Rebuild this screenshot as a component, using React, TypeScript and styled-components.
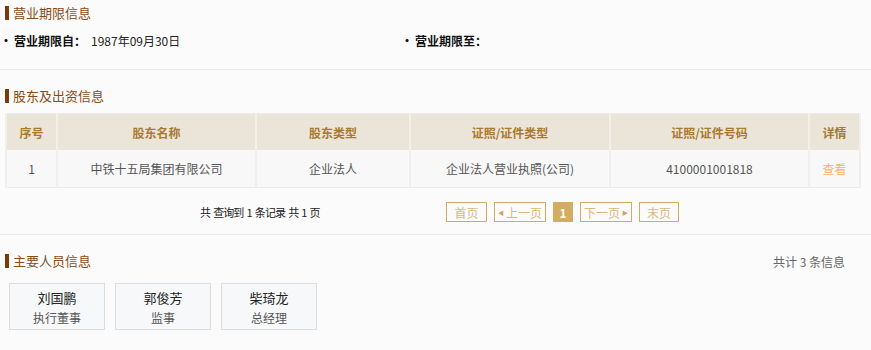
import React from 'react';
import styled, { createGlobalStyle } from 'styled-components';

const GlobalStyle = createGlobalStyle`
  body {
    margin: 0;
    background: #fbfbfb;
    font-family: "Noto Sans CJK SC", "Noto Sans", "Liberation Sans", sans-serif;
    font-size: 12px;
    color: #333;
  }
`;

const Section = styled.div<{ $top: number; $bottom: number; $line?: boolean }>`
  padding: ${p => p.$top}px 0 ${p => p.$bottom}px;
  border-bottom: ${p => (p.$line ? '1px solid #ebebeb' : 'none')};
`;

const TitleRow = styled.div`
  display: flex;
  align-items: center;
  justify-content: space-between;
  height: 20px;
  padding-right: 26px;
`;

const Title = styled.h3`
  margin: 0;
  display: flex;
  align-items: center;
  font-size: 13px;
  font-weight: normal;
  color: #8b4a12;
  line-height: 20px;
  &::before {
    content: '';
    width: 4px;
    height: 14px;
    background: #7c3a08;
    margin: 0 4px 0 5px;
  }
`;

const Count = styled.span`
  color: #666;
  font-size: 12px;
`;

const InfoRow = styled.div`
  display: grid;
  grid-template-columns: 401px 1fr;
  margin-top: 8px;
  line-height: 20px;
`;

const Field = styled.div`
  display: flex;
  align-items: center;
  white-space: nowrap;
`;

const Label = styled.span`
  font-weight: bold;
  color: #111;
  min-width: 91px;
  &::before {
    content: '·';
    margin-right: 2px;
  }
`;

const Value = styled.span`
  color: #222;
`;

const Table = styled.table`
  margin: 7px 0 0 5px;
  width: 856px;
  border-collapse: collapse;
  border: 1px solid #ebebeb;
  table-layout: fixed;
  text-align: center;
`;

const Th = styled.th<{ $w?: number }>`
  width: ${p => (p.$w ? `${p.$w}px` : 'auto')};
  height: 36px;
  padding: 0;
  background: #ebe4d9;
  color: #a87a2e;
  font-size: 12px;
  font-weight: bold;
  border: 2px solid #f3f0ea;
  border-top: none;
  border-bottom: none;
`;

const Td = styled.td<{ $link?: boolean }>`
  height: 37px;
  padding: 0;
  background: #f8f8f8;
  color: ${p => (p.$link ? '#f9b36d' : '#555')};
  border: 2px solid #efefef;
  border-top: none;
  border-bottom: none;
`;

const Pager = styled.div`
  display: flex;
  align-items: center;
  margin-top: 14px;
  padding-left: 200px;
`;

const PagerInfo = styled.span`
  width: 246px;
  color: #222;
  font-size: 11px;
  white-space: pre;
  letter-spacing: -0.9px;
  word-spacing: 1.5px;
`;

const PageButtons = styled.div`
  display: flex;
  gap: 7px;
`;

const PageButton = styled.span<{ $active?: boolean; $w: number }>`
  box-sizing: border-box;
  width: ${p => p.$w}px;
  height: 20px;
  display: flex;
  align-items: center;
  justify-content: center;
  gap: 2px;
  border: 1px solid #d3ab63;
  background: ${p => (p.$active ? '#d3ab63' : 'transparent')};
  color: ${p => (p.$active ? '#fff' : '#dcb77a')};
  font-size: 12px;
  font-weight: ${p => (p.$active ? 'bold' : 'normal')};
`;

const Arrow = styled.span`
  font-size: 6px;
  color: #cfa55b;
`;

const People = styled.div`
  display: flex;
  gap: 10px;
  margin-top: 12px;
  padding-left: 9px;
`;

const Person = styled.div`
  box-sizing: border-box;
  width: 96px;
  height: 47px;
  padding-top: 2px;
  border: 1px solid #dcdcdc;
  background: #f6f8f9;
  display: flex;
  flex-direction: column;
  align-items: center;
  justify-content: center;
`;

const Name = styled.span`
  font-size: 13px;
  color: #222;
  line-height: 20px;
`;

const Role = styled.span`
  font-size: 12px;
  color: #555;
  line-height: 19px;
`;

const cols = [
  { t: '序号', w: 49 },
  { t: '股东名称', w: 197 },
  { t: '股东类型', w: 152 },
  { t: '证照/证件类型', w: 198 },
  { t: '证照/证件号码', w: 197 },
  { t: '详情' },
];

const people = [
  { name: '刘国鹏', role: '执行董事' },
  { name: '郭俊芳', role: '监事' },
  { name: '柴琦龙', role: '总经理' },
];

export default function App() {
  return (
    <>
      <GlobalStyle />
      <Section $top={3} $bottom={18} $line>
        <TitleRow>
          <Title>营业期限信息</Title>
        </TitleRow>
        <InfoRow>
          <Field>
            <Label>营业期限自：</Label>
            <Value>1987年09月30日</Value>
          </Field>
          <Field>
            <Label>营业期限至：</Label>
          </Field>
        </InfoRow>
      </Section>

      <Section $top={16} $bottom={12} $line>
        <TitleRow>
          <Title>股东及出资信息</Title>
        </TitleRow>
        <Table>
          <thead>
            <tr>
              {cols.map(c => (
                <Th key={c.t} $w={c.w}>{c.t}</Th>
              ))}
            </tr>
          </thead>
          <tbody>
            <tr>
              <Td>1</Td>
              <Td>中铁十五局集团有限公司</Td>
              <Td>企业法人</Td>
              <Td>企业法人营业执照(公司)</Td>
              <Td>4100001001818</Td>
              <Td $link>查看</Td>
            </tr>
          </tbody>
        </Table>
        <Pager>
          <PagerInfo>共 查询到 1 条记录 共 1 页</PagerInfo>
          <PageButtons>
            <PageButton $w={41}>首页</PageButton>
            <PageButton $w={52}><Arrow>◀</Arrow>上一页</PageButton>
            <PageButton $w={20} $active>1</PageButton>
            <PageButton $w={52}>下一页<Arrow>▶</Arrow></PageButton>
            <PageButton $w={40}>末页</PageButton>
          </PageButtons>
        </Pager>
      </Section>

      <Section $top={16} $bottom={0}>
        <TitleRow>
          <Title>主要人员信息</Title>
          <Count>共计 3 条信息</Count>
        </TitleRow>
        <People>
          {people.map(p => (
            <Person key={p.name}>
              <Name>{p.name}</Name>
              <Role>{p.role}</Role>
            </Person>
          ))}
        </People>
      </Section>
    </>
  );
}
